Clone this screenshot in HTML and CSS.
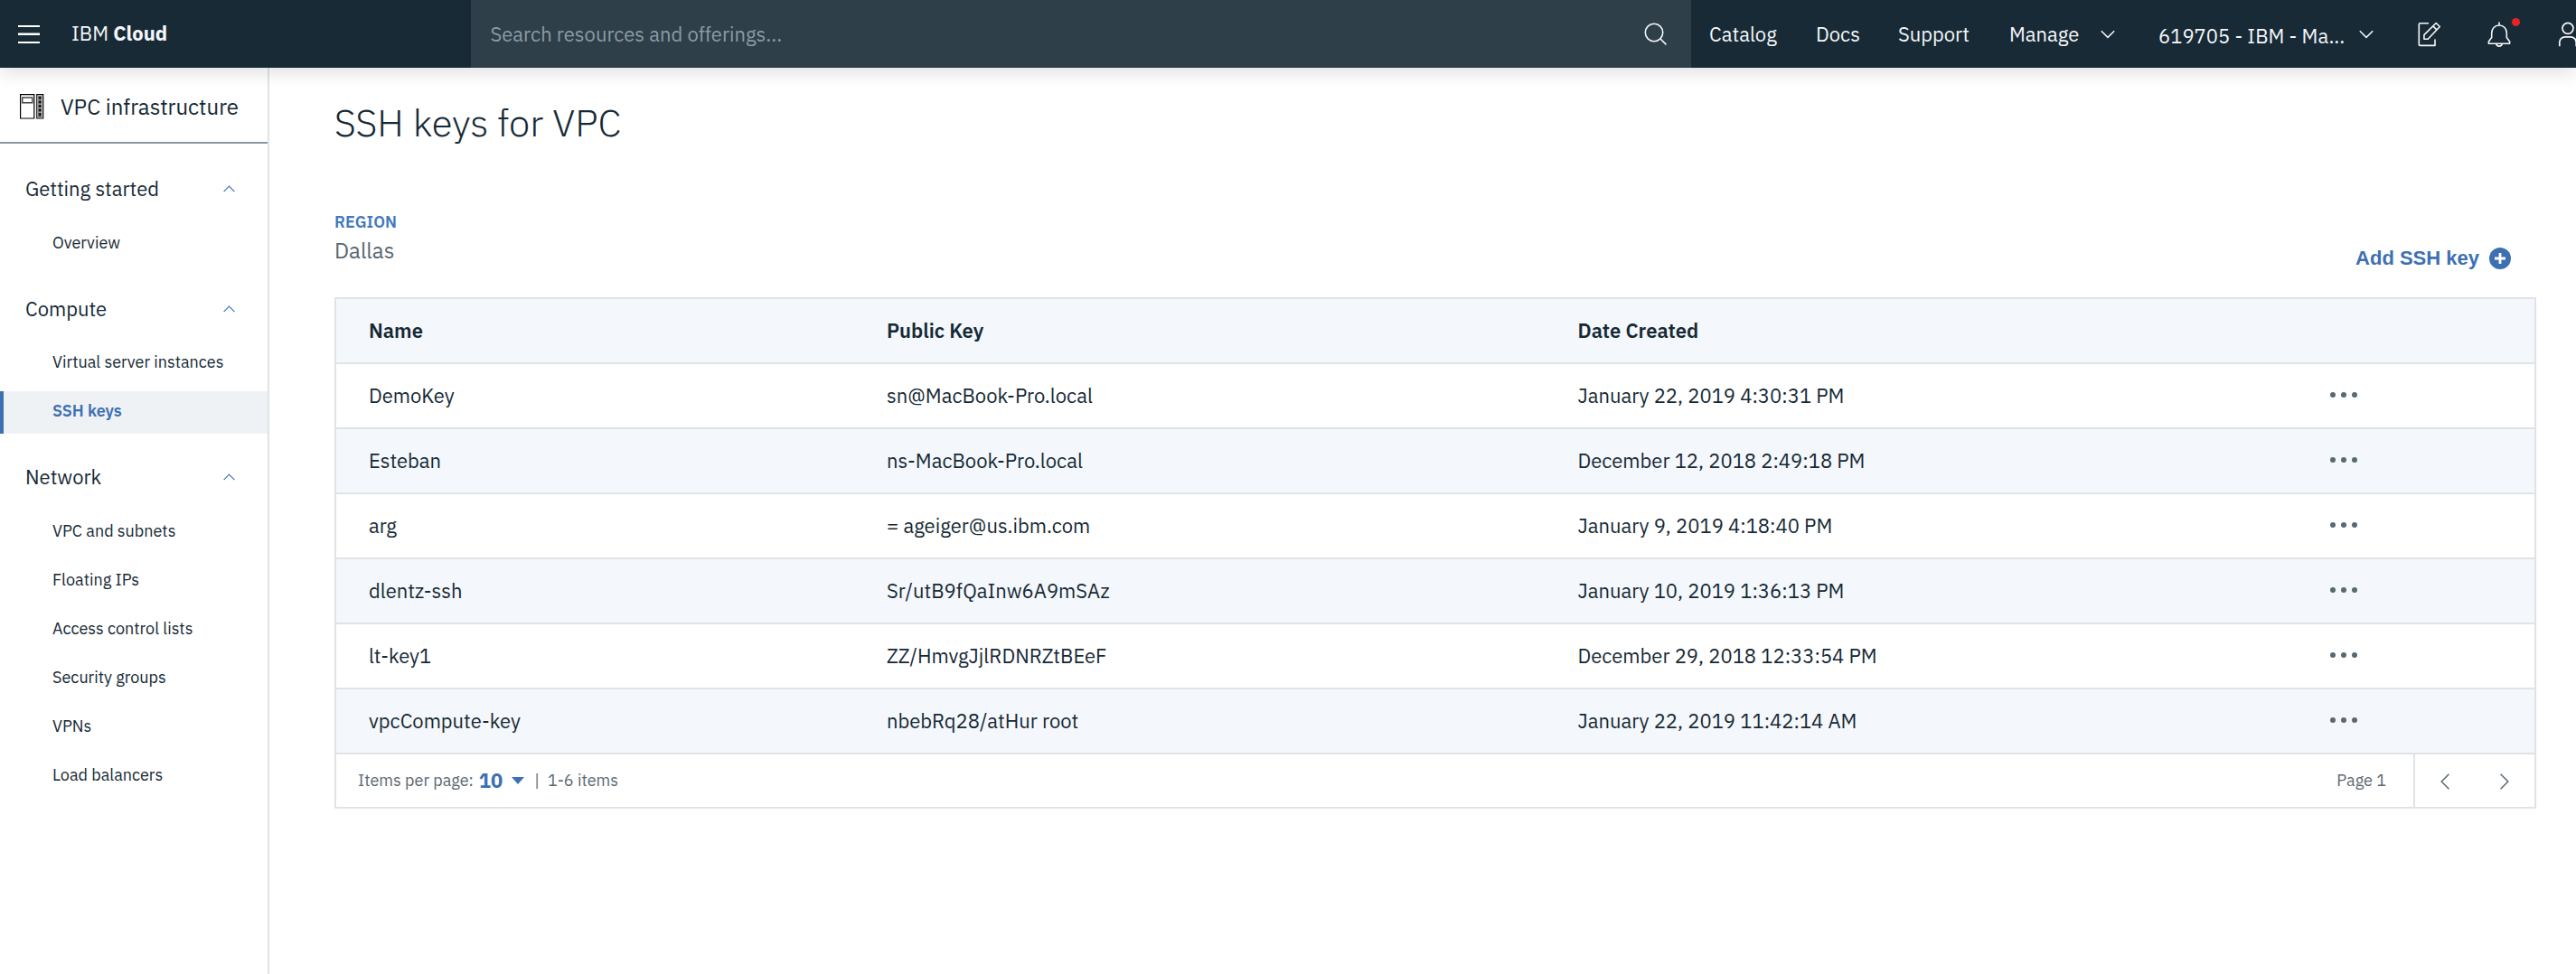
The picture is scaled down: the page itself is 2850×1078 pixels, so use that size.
FILE: index.html
```html
<!DOCTYPE html>
<html lang="en">
<head>
<meta charset="utf-8">
<title>SSH keys for VPC</title>
<link rel="stylesheet" href="styles.css">
</head>
<body>
<header class="topbar">
  <div class="topbar-left">
    <svg class="menu-icon" width="24" height="20" viewBox="0 0 24 20" fill="#fff"><path d="M0 0h24v2H0zM0 8.6h24v2.4H0zM0 18h24v2H0z"/></svg>
    <span class="brand">IBM <b>Cloud</b></span>
  </div>
  <div class="search">
    <span>Search resources and offerings...</span>
    <svg width="26" height="26" viewBox="0 0 26 26" fill="none" stroke="#f4f7fb" stroke-width="1.6"><circle cx="11" cy="11" r="9.7"/><path d="M17.8 17.8l6.6 6.6"/></svg>
  </div>
  <nav class="nav">
    <a>Catalog</a>
    <a>Docs</a>
    <a>Support</a>
    <a>Manage</a>
    <svg class="chevron" width="16" height="10" viewBox="0 0 16 10" fill="none" stroke="#f4f7fb" stroke-width="1.5"><path d="M.8 1.2L8 8.4l7.200-7.200"/></svg>
    <a class="account">619705 - IBM - Ma...</a>
    <svg class="chevron" width="16" height="10" viewBox="0 0 16 10" fill="none" stroke="#f4f7fb" stroke-width="1.5"><path d="M.8 1.2L8 8.4l7.200-7.200"/></svg>
    <svg width="26" height="28" viewBox="0 0 26 28" fill="none" stroke="#f4f7fb" stroke-width="1.6" stroke-linejoin="round"><path d="M12 1.800H2.500a1.200 1.200 0 0 0-1.200 1.200v22.200a1.200 1.200 0 0 0 1.200 1.200H19v-7"/><path d="M6.900 19.300v-4.700L20.200 1.500l4.100 4L11.200 19.300zM16.800 4.900l4 4"/></svg>
    <span class="bell">
      <svg width="26" height="28" viewBox="0 0 26 28" fill="none" stroke="#f4f7fb" stroke-width="1.6" stroke-linejoin="round"><path d="M13 .5v3.500M13 4c-5 0-8.300 3.800-8.300 8.500v5L1.400 22v2.200h23.200V22l-3.300-4.500v-5C21.300 7.800 18 4 13 4z"/><path d="M9.700 24.400c.5 3.600 6.100 3.600 6.600 0"/></svg>
      <i class="dot"></i>
    </span>
    <svg width="22" height="28" viewBox="0 0 22 28" fill="none" stroke="#f4f7fb" stroke-width="1.7"><circle cx="11" cy="7.300" r="6"/><path d="M1.800 27.200v-4.400a6 6 0 0 1 6-6h6.400a6 6 0 0 1 6 6v4.400"/></svg>
  </nav>
</header>
<div class="body">
  <aside class="sidebar">
    <div class="product">
      <svg width="27" height="28" viewBox="0 0 27 28" fill="none" stroke="#000"><path d="M.6.6H15.800v26.400H.6zM18.800.6h6.900v26.400h-6.900z" stroke-width="1.200"/><path d="M2.700 4h11.100v5.800H2.700z" stroke="#444" stroke-width="1.400"/><path d="M22.200 2.200v23.600" stroke="#555" stroke-width="4"/><path d="M22.200 3.300v2.200m0 2.300V10m0 2.300v2.200m0 2.300V19m0 2.300v2.200" stroke="#111" stroke-width="2.600"/><path d="M20.400 6.700H24M20.400 11.200H24M20.400 15.700H24M20.400 20.200H24" stroke="#ccc" stroke-width=".8"/></svg>
      <span>VPC infrastructure</span>
    </div>
    <section class="group">
      <h2>Getting started<svg width="13" height="8" viewBox="0 0 13 8" fill="none" stroke="#4178be" stroke-width="1.200"><path d="M.6 7.200l5.900-6 5.900 6"/></svg></h2>
      <a>Overview</a>
    </section>
    <section class="group">
      <h2>Compute<svg width="13" height="8" viewBox="0 0 13 8" fill="none" stroke="#4178be" stroke-width="1.200"><path d="M.6 7.200l5.900-6 5.900 6"/></svg></h2>
      <a>Virtual server instances</a>
      <a class="active">SSH keys</a>
    </section>
    <section class="group">
      <h2>Network<svg width="13" height="8" viewBox="0 0 13 8" fill="none" stroke="#4178be" stroke-width="1.200"><path d="M.6 7.200l5.900-6 5.900 6"/></svg></h2>
      <a>VPC and subnets</a>
      <a>Floating IPs</a>
      <a>Access control lists</a>
      <a>Security groups</a>
      <a>VPNs</a>
      <a>Load balancers</a>
    </section>
  </aside>
  <main class="content">
    <h1>SSH keys for VPC</h1>
    <div class="toolbar">
      <div class="region">
        <span class="region-label">REGION</span>
        <span class="region-value">Dallas</span>
      </div>
      <button class="add">Add SSH key<svg width="24" height="24" viewBox="0 0 24 24"><circle cx="12" cy="12" r="12" fill="#3d70b2"/><path d="M12 6v12M6 12h12" stroke="#fff" stroke-width="2.800"/></svg></button>
    </div>
    <div class="table">
      <div class="row head"><span>Name</span><span>Public Key</span><span>Date Created</span><span></span></div>
      <div class="row"><span>DemoKey</span><span>sn@MacBook-Pro.local</span><span>January 22, 2019 4:30:31 PM</span><span class="more"><i></i><i></i><i></i></span></div>
      <div class="row"><span>Esteban</span><span>ns-MacBook-Pro.local</span><span>December 12, 2018 2:49:18 PM</span><span class="more"><i></i><i></i><i></i></span></div>
      <div class="row"><span>arg</span><span>= ageiger@us.ibm.com</span><span>January 9, 2019 4:18:40 PM</span><span class="more"><i></i><i></i><i></i></span></div>
      <div class="row"><span>dlentz-ssh</span><span>Sr/utB9fQaInw6A9mSAz</span><span>January 10, 2019 1:36:13 PM</span><span class="more"><i></i><i></i><i></i></span></div>
      <div class="row"><span>lt-key1</span><span>ZZ/HmvgJjlRDNRZtBEeF</span><span>December 29, 2018 12:33:54 PM</span><span class="more"><i></i><i></i><i></i></span></div>
      <div class="row"><span>vpcCompute-key</span><span>nbebRq28/atHur root</span><span>January 22, 2019 11:42:14 AM</span><span class="more"><i></i><i></i><i></i></span></div>
      <div class="pager">
        <span class="per-page">Items per page:</span>
        <b class="size">10</b>
        <svg class="caret" width="14" height="8" viewBox="0 0 14 8" fill="#3d70b2"><path d="M0 0h14L7 8z"/></svg>
        <span class="bar">|</span>
        <span>1-6 items</span>
        <span class="page">Page 1</span>
        <span class="arrows">
          <svg width="10" height="18" viewBox="0 0 10 18" fill="none" stroke="#5a6872" stroke-width="1.500"><path d="M9.400.8L1.200 9l8.200 8.200"/></svg>
          <svg width="10" height="18" viewBox="0 0 10 18" fill="none" stroke="#5a6872" stroke-width="1.500"><path d="M.6.8L8.800 9 .6 17.200"/></svg>
        </span>
      </div>
    </div>
  </main>
</div>
</body>
</html>
```
FILE: styles.css
```css
* { box-sizing: border-box; }

body {
  margin: 0;
  height: 1078px;
  display: flex;
  flex-direction: column;
  overflow: hidden;
  background: #fff;
  color: #152935;
  font: 400 22px/30px "IBM Plex Sans", Roboto, "Liberation Sans", sans-serif;
}

svg { display: block; flex: none; }

/* Top bar */
.topbar {
  position: relative;
  z-index: 1;
  display: flex;
  height: 75px;
  background: #182a35;
  color: #f4f7fb;
  box-shadow: 0 8px 16px rgba(0, 0, 0, .1);
}
.topbar-left { display: flex; flex: none; align-items: center; width: 521px; padding: 0 0 0 20px; }
.brand { margin-left: 35px; padding-bottom: 1px; }
.brand b { font-weight: 700; }
.search {
  display: flex;
  flex: none;
  align-items: center;
  justify-content: space-between;
  width: 1350px;
  padding: 0 26px 0 21.5px;
  background: #2e3f49;
  color: #8c9ba5;
}
.nav {
  display: grid;
  flex: none;
  grid-template-columns: 118px 91px 123px 101px 64px 222px 65px 77px 78px 22px;
  align-items: center;
  padding: 0 0 0 20px;
}
.chevron { margin-top: 1px; }
.account { padding-top: 4px; }
.bell { position: relative; }
.dot {
  position: absolute;
  left: 27px;
  top: -4px;
  width: 9px;
  height: 9px;
  border-radius: 50%;
  background: #e62325;
}

.body { display: flex; flex: 1; }

/* Side navigation */
.sidebar { flex: none; width: 298px; border-right: 2px solid #dfe3e6; }
.product {
  display: flex;
  align-items: center;
  gap: 18px;
  height: 84px;
  margin-bottom: 27px;
  padding: 4px 0 0 22px;
  border-bottom: 2px solid #8897a2;
  font-size: 24px;
}
.group { margin-bottom: 25.5px; }
.group h2 {
  display: flex;
  align-items: center;
  justify-content: space-between;
  height: 47px;
  margin: 0 0 13px;
  padding: 0 36px 1px 28px;
  font-size: 22px;
  font-weight: 400;
}
.group a {
  display: flex;
  align-items: center;
  height: 47px;
  margin-bottom: 7px;
  padding: 0 0 2px 58px;
  font-size: 18px;
}
.group .active {
  padding-left: 54px;
  border-left: 4px solid #3d70b2;
  background: #eff2f5;
  color: #3d70b2;
  font-weight: 600;
}

/* Main content */
.content { width: 2508px; padding: 33px 0 0 72px; }
h1 { margin: 0; font-size: 42px; font-weight: 300; line-height: 56px; }
.toolbar {
  display: flex;
  align-items: flex-start;
  justify-content: space-between;
  height: 165px;
  padding: 67px 28px 0 0;
}
.region { display: flex; flex-direction: column; gap: 1px; }
.region-label { font-size: 18px; font-weight: 600; color: #4178be; }
.region-value { font-size: 24px; color: #5a6872; }
.add {
  display: flex;
  align-items: center;
  gap: 11px;
  margin-top: 40px;
  padding: 0;
  border: 0;
  background: none;
  color: #3d70b2;
  font: 700 22px/30px "Liberation Sans", Arial, sans-serif;
}

/* Keys table */
.table { width: 2436px; border: 2px solid #dfe3e6; }
.row {
  display: grid;
  grid-template-columns: 573px 764.5px 832.5px 1fr;
  align-items: center;
  height: 72px;
  padding-left: 36px;
  border-bottom: 2px solid #dfe3e6;
}
.row:nth-child(odd) { background: #f4f7fb; }
.head { font-weight: 600; }
.more { display: flex; gap: 6px; padding-bottom: 2px; }
.more i { width: 6px; height: 6px; border-radius: 50%; background: #5a6872; }

.pager {
  display: flex;
  align-items: center;
  height: 58px;
  padding-left: 24px;
  font-size: 18px;
  color: #5a6872;
}
.size { margin-left: 6px; font-size: 22px; font-weight: 700; color: #3d70b2; }
.caret { margin: 0 11px 0 10px; }
.bar { margin-right: 9px; }
.page { margin-left: auto; }
.arrows {
  display: flex;
  align-items: center;
  align-self: stretch;
  gap: 56px;
  width: 134px;
  margin-left: 30px;
  padding: 2px 0 0 28px;
  border-left: 2px solid #dfe3e6;
}
```
